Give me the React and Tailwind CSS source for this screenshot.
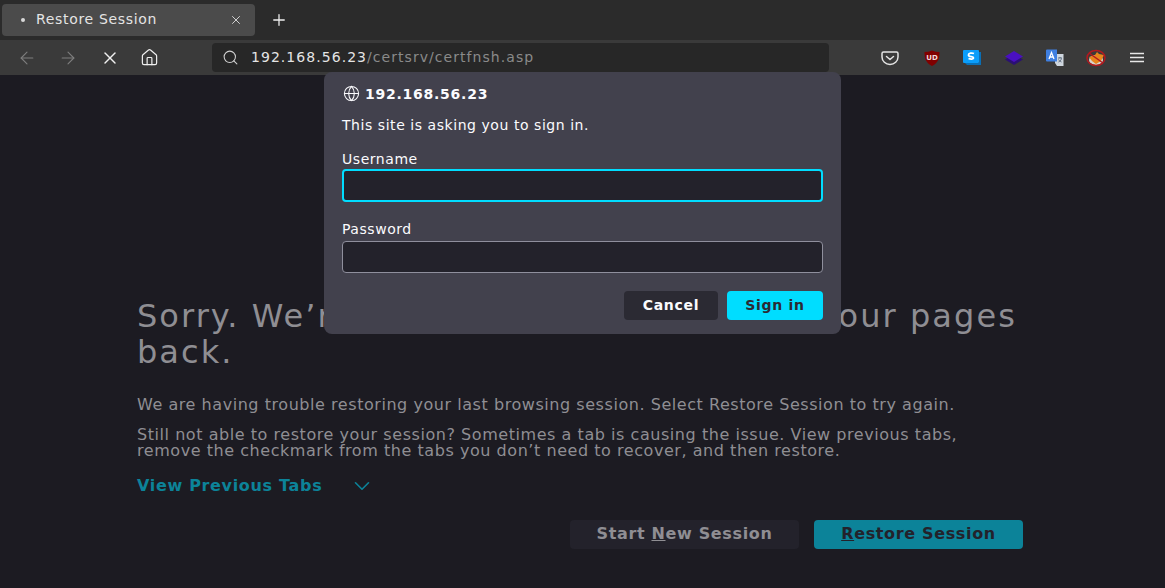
import React from "react";
import { ArrowLeft, ArrowRight, ChevronDown, Globe, Home, Plus, Search, X } from "lucide-react";

const ExtensionIcons = () => (
  <div className="flex items-center gap-[21px]">
    {/* pocket */}
    <svg width="20" height="20" viewBox="0 0 20 20" fill="none" className="mr-[2px]">
      <path d="M3.5 4h13A1.5 1.5 0 0 1 18 5.5V9a8 7.5 0 0 1-16 0V5.5A1.5 1.5 0 0 1 3.5 4Z" stroke="#e4e4e4" strokeWidth="1.5" />
      <path d="M6.5 8.5 10 11.5l3.5-3" stroke="#e4e4e4" strokeWidth="1.5" strokeLinecap="round" strokeLinejoin="round" />
    </svg>
    {/* ublock */}
    <svg width="18" height="20" viewBox="0 0 18 20">
      <path d="M9 2.500c2.500 1 5 1.500 7.500 1.500 0 6-.8 10.500-7.500 14-6.700-3.500-7.500-8-7.500-14 2.500 0 5-.5 7.500-1.500Z" fill="#800000" />
      <text x="9" y="11.500" textAnchor="middle" fontSize="7" fontWeight="700" fill="#f0d8d8">UD</text>
    </svg>
    {/* s badge */}
    <svg width="20" height="18" viewBox="0 0 20 18">
      <path d="M3 14h14V3h2v13H5Z" fill="#0a6fb5" />
      <rect x="1" y="1" width="16" height="13" rx="1" fill="#0a9dfa" />
      <path d="M12 4.500C10 3.700 6.500 4 6.500 6c0 2.300 5 1.200 5 3 0 1.300-3 1.300-5 .5" fill="none" stroke="#fff" strokeWidth="1.800" />
    </svg>
    {/* purple layers */}
    <svg width="20" height="18" viewBox="0 0 20 18" className="ml-[1px]">
      <path d="M10 5 19 10.500 10 16 1 10.500Z" fill="#2b1075" />
      <path d="M10 2 19 7.500 10 13 1 7.500Z" fill="#4a10c0" />
    </svg>
    {/* translate */}
    <svg width="20" height="20" viewBox="0 0 20 20">
      <path d="M10 6h8.500v12H12l-2-3Z" fill="#cfd6de" />
      <path d="M13 10h4M15 9v1M16.500 10.500c-.6 2-1.500 3-3 3.500M13.500 11.500c.7 1 1.500 2 3 2.500" stroke="#45566b" fill="none" strokeWidth=".8" />
      <path d="M1 2.500A1 1 0 0 1 2 1.500h10v12H2a1 1 0 0 1-1-1Z" fill="#3f7fe0" />
      <path d="M4 11 6.500 4.500 9 11M5 9h3" stroke="#fff" strokeWidth="1.300" fill="none" />
    </svg>
    {/* blocked fox */}
    <svg width="20" height="20" viewBox="0 0 20 20">
      <ellipse cx="10" cy="12" rx="7" ry="5" fill="#d9d4cc" />
      <path d="M3 9 9 7l2-3 2 2 5 1-3 6-5 3-4-3Z" fill="#e8851c" />
      <ellipse cx="10" cy="10" rx="9" ry="7.500" fill="none" stroke="#b3191f" strokeWidth="1.500" />
      <path d="M3 5 17 15" stroke="#b3191f" strokeWidth="1.500" />
    </svg>
  </div>
);

const LoginDialog = () => (
  <div className="absolute left-[324px] top-[72px] h-[262px] w-[517px] rounded-lg bg-[#42414d] px-[18px] pt-[13px] text-[14px] leading-4 tracking-[0.55px] text-[#fbfbfe]">
    <div className="flex items-center gap-[5px] pl-[1px] font-bold tracking-[0.75px]">
      <Globe size={17} strokeWidth={1.5} />
      <span>192.168.56.23</span>
    </div>
    <p className="mt-[15px]">This site is asking you to sign in.</p>
    <label className="mt-[18px] block">Username</label>
    <div className="mt-[2px] h-[33px] rounded-[4px] border-2 border-[#00ddff] bg-[#23222b]" />
    <label className="mt-[19px] block">Password</label>
    <div className="mt-[4px] h-[32px] rounded-[4px] border border-[#8f8f9d] bg-[#23222b]" />
    <div className="mt-[18px] flex justify-end gap-[9px] font-bold tracking-[0.7px]">
      <button className="h-[29px] w-[94px] rounded-[4px] bg-[#2b2a33] pb-[2px]">Cancel</button>
      <button className="h-[29px] w-[96px] rounded-[4px] bg-[#00ddff] pb-[2px] text-[#2b2a33]">Sign in</button>
    </div>
  </div>
);

export default function App() {
  return (
    <div className="relative flex h-[588px] w-[1165px] flex-col overflow-hidden bg-[#1c1b22] font-['DejaVu_Sans',sans-serif]">
      {/* tab strip */}
      <div className="flex h-[40px] items-center bg-[#2b2b2b]">
        <div className="ml-[2px] mt-[-1px] flex h-[32px] w-[253px] items-center rounded-[4px] bg-[#4b4b4b] pl-[19px] pr-[12px] text-[#e4e4e4]">
          <span className="h-[4px] w-[4px] rounded-full bg-[#d8d8d8]" />
          <span className="ml-[11px] flex-1 text-[14px] tracking-[0.67px]">Restore Session</span>
          <X size={14} strokeWidth={1.5} />
        </div>
        <Plus size={18} strokeWidth={1.7} className="ml-[15px] text-[#f0f0f0]" />
      </div>
      {/* toolbar */}
      <div className="flex h-[35px] items-center bg-[#3a3a3a] pr-[21px]">
        <ArrowLeft size={20} strokeWidth={1.3} className="ml-[17px] text-[#7e7e7e]" />
        <ArrowRight size={20} strokeWidth={1.3} className="ml-[21px] text-[#7e7e7e]" />
        <X size={20} strokeWidth={1.7} className="ml-[22px] text-[#f0f0f0]" />
        <Home size={19} strokeWidth={1.5} className="ml-[20px] text-[#f0f0f0]" />
        <div className="ml-[53px] flex h-[29px] w-[617px] items-center rounded-[4px] bg-[#272727] pl-[10px] text-[14px] tracking-[1.05px]">
          <Search size={17} strokeWidth={1.5} className="text-[#d0d0d0]" />
          <span className="ml-[12px] text-[#e4e4e4]">192.168.56.23</span>
          <span className="text-[#8a8a8a]">/certsrv/certfnsh.asp</span>
        </div>
        <div className="ml-auto flex items-center gap-[24px]">
          <ExtensionIcons />
          <svg width="14" height="11" viewBox="0 0 14 11">
            <path d="M0 1.500h14M0 5.500h14M0 9.500h14" stroke="#e8e8e8" strokeWidth="1.500" />
          </svg>
        </div>
      </div>
      {/* restore page */}
      <div className="ml-[137px] mt-[223px] w-[886px] text-[16px] tracking-[0.55px] text-[#8f8e93]">
        <h1 className="text-[32px] leading-[36px] tracking-[2.05px]">Sorry. We’re having problems getting your pages back.</h1>
        <p className="mt-[27px] leading-4">We are having trouble restoring your last browsing session. Select Restore Session to try again.</p>
        <p className="mt-[14px] leading-4">Still not able to restore your session? Sometimes a tab is causing the issue. View previous tabs, remove the checkmark from the tabs you don’t need to recover, and then restore.</p>
        <div className="mt-[16px] flex h-[22px] items-center font-bold leading-5 tracking-[0.67px] text-[#0c8399]">
          <span>View Previous Tabs</span>
          <ChevronDown size={26} strokeWidth={1.5} className="ml-[27px]" />
        </div>
        <div className="mt-[23px] flex justify-end gap-[15px] font-bold tracking-[0.65px]">
          <button className="h-[29px] w-[229px] rounded-[4px] bg-[#23222b] pb-[2px] text-[#8f8e93]">Start <u>N</u>ew Session</button>
          <button className="h-[29px] w-[209px] rounded-[4px] bg-[#0c8399] pb-[2px] text-[#23222b]"><u>R</u>estore Session</button>
        </div>
      </div>
      <LoginDialog />
    </div>
  );
}
